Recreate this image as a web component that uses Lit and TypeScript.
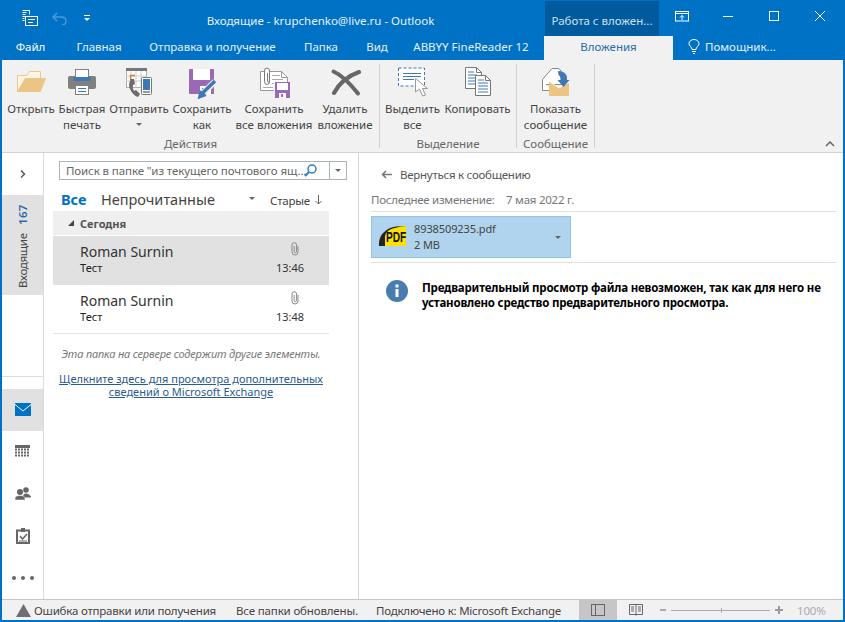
import { LitElement, html, css } from 'lit';
import { customElement } from 'lit/decorators.js';

const icons = {
  folder: html`<svg width="32" height="32" viewBox="0 0 32 32"><path d="M2.500 25V8.500h9l3-4h11V12h-15z" fill="#fbf5ea" stroke="#eec788"/><path d="M10 11h21l-5.300 14H2z" fill="#ecc584"/></svg>`,
  printer: html`<svg width="32" height="32" viewBox="0 0 32 32"><rect x="2" y="9" width="28" height="13" rx="2" fill="#808080"/><rect x="9.500" y="2.500" width="13" height="9" fill="#fff" stroke="#808080"/><rect x="7.500" y="10" width="17" height="4" fill="#3f78b5"/><rect x="9.500" y="18.500" width="13" height="9" fill="#fff" stroke="#808080"/><path d="M12 21.500h8M12 24.500h8" stroke="#3f78b5"/></svg>`,
  send: html`<svg width="32" height="32" viewBox="0 0 32 32"><rect x="3.500" y="1.500" width="20" height="19" fill="#fff" stroke="#aaa"/><rect x="3" y="1" width="21" height="3" fill="#777"/><path d="M8 4v17M13 4v17M18 4v17M3 9h21M3 14h21" stroke="#ccc"/><path d="M7.500 13V8.500H12" fill="none" stroke="#e07b2a" stroke-width="1.300"/><rect x="18.500" y="10.500" width="10" height="17" rx="1" fill="#fff" stroke="#777"/><rect x="20" y="12" width="7" height="11" fill="#3f78b5"/><path d="M20 25h7" stroke="#999" stroke-width="2"/><path d="M8 12q-4 6 0 12 3 5 7 6l2-3-4-4-2 1q-2-3-1-6l2-1-1-5z" fill="#6b6b6b"/></svg>`,
  saveAs: html`<svg width="32" height="32" viewBox="0 0 32 32"><path d="M4 2h23q1 0 1 1v24H4q-1 0-1-1V3q0-1 1-1z" fill="#9a68b5"/><rect x="7" y="2" width="17" height="11" fill="#fff"/><rect x="14" y="19" width="11" height="8" fill="#fff"/><rect x="16" y="21" width="3" height="5" fill="#9a68b5"/><path d="M15.500 27.500L29 14.500" stroke="#f1f1f1" stroke-width="6"/><path d="M14 29.500l1-4 2 .5 1 2zM16.500 26L29 14" stroke="#3f78b5" stroke-width="3.500"/></svg>`,
  saveAll: html`<svg width="32" height="32" viewBox="0 0 32 32"><path d="M2.500 4.500h21l6 6v13h-27z" fill="#fff" stroke="#999"/><path d="M23.500 4.500v6h6" fill="none" stroke="#999"/><path d="M14 8.500h8M14 12.500h11M14 16.500h5M5 20.500h10" stroke="#aaa"/><path d="M11.500 5v9.500q0 3-2.500 3t-2.500-3V4q0-3 2.500-3t2.500 3v10q0 1-1 1t-1-1V6" fill="#fff" stroke="#777"/><path d="M16 15h16v16H16z" fill="#f1f1f1"/><path d="M17 15h15v16H17z" fill="#9a68b5"/><rect x="19" y="16" width="11" height="7" fill="#fff"/><rect x="21" y="26" width="7" height="5" fill="#fff"/><rect x="23" y="27" width="2" height="3" fill="#9a68b5"/></svg>`,
  del: html`<svg width="32" height="32" viewBox="0 0 32 32" fill="none" stroke="#666" stroke-linecap="round"><path d="M4.500 4.500Q15 9 29 26.500" stroke-width="4"/><path d="M30 5Q13 11 5 26" stroke-width="4"/></svg>`,
  selectAll: html`<svg width="32" height="32" viewBox="0 0 32 32"><rect x="1.500" y="1" width="26" height="18" fill="#fff" stroke="#3f78b5" stroke-dasharray="3 2"/><path d="M6 6.500h18M6 9.500h18M6 12.500h11" stroke="#3f78b5"/><path d="M18.500 11.500V25l4-3 3 7 3-1-3-6.500h5z" fill="#fff" stroke="#999"/></svg>`,
  copy: html`<svg width="32" height="32" viewBox="0 0 32 32"><path d="M3.500 .5h11l5 5v16h-16z" fill="#fff" stroke="#777"/><path d="M14.500 .5v5h5" fill="none" stroke="#777"/><path d="M6 5h6M6 8h9M6 11h9M6 14h9M6 17h9" stroke="#3f78b5"/><path d="M13.500 8.500h10l5 5v15h-15z" fill="#fff" stroke="#777"/><path d="M23.500 8.500v5h5" fill="none" stroke="#777"/><path d="M16 13h6M16 16h10M16 19h10M16 22h10M16 25h10" stroke="#3f78b5"/></svg>`,
  message: html`<svg width="32" height="32" viewBox="0 0 32 32"><path d="M2.500 12.500L12 1.500h7l3 4v12H2.500z" fill="#fff" stroke="#888"/><path d="M2.500 12.500v11H10" fill="#fff" stroke="#888"/><path d="M9 14l10 7 10-6v14H9z" fill="#ecc584"/><path d="M9 14l10 7 10-6" fill="none" stroke="#fff"/><path d="M18 4q9 0 9 8v1h2.500l-6 7-6-7h3v-1q0-3-2-4z" fill="#3f78b5"/></svg>`,
  mail: html`<svg width="16" height="13" viewBox="0 0 16 13"><rect width="16" height="13" fill="#0072c6"/><path d="M0 1.500L8 8l8-6.500" fill="none" stroke="#fff"/></svg>`,
  calendar: html`<svg width="15" height="13" viewBox="0 0 15 13"><rect width="15" height="3" fill="#666"/><path d="M0 4.500h15M0 7.500h15M0 10.500h15" stroke="#666" stroke-width="2" stroke-dasharray="2 1"/></svg>`,
  people: html`<svg width="16" height="13" viewBox="0 0 16 13"><circle cx="11" cy="3" r="2.800" fill="#666"/><path d="M8 10q0-3.500 3-3.500t5 3v1H9z" fill="#666"/><circle cx="5" cy="5" r="3" fill="#666"/><path d="M0 13v-1.500q0-3 5-3t5 3V13z" fill="#666" stroke="#fff" stroke-width=".5"/></svg>`,
  tasks: html`<svg width="14" height="16" viewBox="0 0 14 16"><path d="M1 2.500h12v12.500H1z" fill="#fff" stroke="#666" stroke-width="2"/><path d="M5 0h4v4H5z" fill="#666"/><path d="M4 8l2.500 3L11 6" fill="none" stroke="#666" stroke-width="1.500"/><path d="M3 13h8" stroke="#666"/></svg>`,
  clip: html`<svg width="8" height="14" viewBox="0 0 8 14"><path d="M7 4v6a3 3 0 0 1-6 0V3a2.300 2.300 0 0 1 4.600 0v6.500a1.200 1.200 0 0 1-2.400 0V4" fill="none" stroke="#8a8a8a"/></svg>`,
  pdf: html`<svg width="30" height="24" viewBox="0 0 30 24"><path d="M2 21Q1 9 13 3 17 1 29 1v2H19Q11 4 9 11v10z" fill="#222"/><path d="M8 21V11q2-7 10-8 6-2 11-2v20z" fill="#ffe100"/><text x="9" y="17" font-family="Liberation Sans" font-size="14.500" font-weight="700" fill="#111" textLength="20" lengthAdjust="spacingAndGlyphs">PDF</text></svg>`,
};

const tabs = [
  { t: 'Файл', w: 57, strong: true },
  { t: 'Главная', w: 80 },
  { t: 'Отправка и получение', w: 147 },
  { t: 'Папка', w: 70 },
  { t: 'Вид', w: 42 },
  { t: 'ABBYY FineReader 12', w: 146 },
];

const groups = [
  {
    label: 'Действия',
    width: 378,
    items: [
      { icon: icons.folder, lines: ['Открыть'], w: 58 },
      { icon: icons.printer, lines: ['Быстрая', 'печать'], w: 44 },
      { icon: icons.send, lines: ['Отправить'], w: 70, caret: true },
      { icon: icons.saveAs, lines: ['Сохранить', 'как'], w: 56 },
      { icon: icons.saveAll, lines: ['Сохранить', 'все вложения'], w: 88 },
      { icon: icons.del, lines: ['Удалить', 'вложение'], w: 54 },
    ],
  },
  {
    label: 'Выделение',
    width: 137,
    items: [
      { icon: icons.selectAll, lines: ['Выделить', 'все'], w: 65 },
      { icon: icons.copy, lines: ['Копировать'], w: 65 },
    ],
  },
  {
    label: 'Сообщение',
    width: 78,
    items: [{ icon: icons.message, lines: ['Показать', 'сообщение'], w: 77 }],
  },
];

const mails = [
  { time: '13:46', selected: true },
  { time: '13:48', selected: false },
];

@customElement('app-root')
export class AppRoot extends LitElement {
  static styles = css`
    :host {
      display: block;
      width: 845px;
      height: 622px;
      overflow: hidden;
      font-family: 'Noto Sans', sans-serif;
      font-size: 11.5px;
      color: #444;
    }
    svg { display: block; }
    .window {
      height: 100%;
      box-sizing: border-box;
      background: #0072c6;
      padding: 0 2px 2px;
      display: flex;
      flex-direction: column;
    }
    .titlebar { height: 36px; display: flex; color: #fff; flex: none; }
    .qat { width: 100px; display: flex; align-items: center; padding-left: 20px; gap: 14px; box-sizing: border-box; }
    .title { flex: 1; text-align: center; line-height: 41px; color: #e8f1f9; padding-right: 6px; }
    .context { width: 114px; margin-top: 1px; background: #005a9e; color: #cfe0ee; text-align: center; line-height: 40px; }
    .controls { display: flex; }
    .ctl { width: 46px; display: flex; align-items: center; justify-content: center; padding-bottom: 4px; box-sizing: border-box; }
    .tabs { height: 24px; display: flex; flex: none; color: #e6f0f8; line-height: 21px; }
    .tab { text-align: center; white-space: nowrap; }
    .tab.strong { color: #fff; }
    .tab.active { width: 129px; background: #f1f1f1; color: #2b6ca8; }
    .help { display: flex; align-items: center; gap: 5px; padding: 0 0 3px 15px; }
    .ribbon {
      height: 93px;
      flex: none;
      background: #f1f1f1;
      border-bottom: 1px solid #d2d2d2;
      display: flex;
      position: relative;
      box-sizing: border-box;
    }
    .group {
      margin: 4px 0;
      box-sizing: border-box;
      border-right: 1px solid #d0d0d0;
      display: flex;
      flex-direction: column;
    }
    .items { display: flex; height: 72px; flex: none; }
    .item { text-align: center; line-height: 16px; white-space: nowrap; }
    .item .pic { height: 37px; display: flex; justify-content: center; padding-top: 3px; box-sizing: border-box; }
    .item .line { display: block; }
    .item .name { display: flex; flex-direction: column; align-items: center; }
    .caret { width: 0; height: 0; border: 3px solid transparent; border-top: 3px solid #666; border-bottom: 0; margin-top: 6px; }
    .glabel { text-align: center; line-height: 16px; height: 12px; color: #666; }
    .collapse { position: absolute; right: 8px; bottom: 5px; }
    .main { flex: 1; display: flex; background: #fff; min-height: 0; }
    .nav {
      width: 42px;
      flex: none;
      box-sizing: border-box;
      border-right: 1px solid #dcdcdc;
      display: flex;
      flex-direction: column;
    }
    .expand { height: 42px; display: flex; align-items: center; justify-content: center; }
    .folder {
      height: 100px;
      background: #e1e1e1;
      writing-mode: vertical-rl;
      transform: rotate(180deg);
      display: flex;
      align-items: center;
      gap: 8px;
      padding-top: 7px;
      box-sizing: border-box;
      color: #444;
      letter-spacing: -0.3px;
    }
    .folder b { color: #2b6ca8; font-weight: 600; letter-spacing: 0.3px; }
    .grow { flex: 1; }
    .navsep { border-top: 1px solid #dcdcdc; margin-bottom: 12px; }
    .navitem { height: 42px; display: flex; align-items: center; justify-content: center; padding-bottom: 1px; box-sizing: border-box; }
    .navitem.on { background: #e1e1e1; }
    .dots { display: flex; gap: 5px; }
    .dots i { width: 4px; height: 4px; border-radius: 50%; background: #666; }
    .list {
      width: 315px;
      flex: none;
      box-sizing: border-box;
      border-right: 1px solid #d4d4d4;
      padding: 8px 29px 0 9px;
    }
    .search {
      margin-left: 6px;
      width: 288px;
      height: 19px;
      box-sizing: border-box;
      border: 1px solid #abb3bb;
      display: flex;
      align-items: center;
      color: #666;
      line-height: 17px;
    }
    .search .q { flex: 1; padding-left: 6px; white-space: nowrap; letter-spacing: -0.1px; min-width: 0; }
    .search .mag { width: 25px; padding-right: 12px; box-sizing: border-box; }
    .search .drop { width: 16px; height: 100%; border-left: 1px solid #abb3bb; display: flex; align-items: center; justify-content: center; }
    .filter { height: 31px; display: flex; align-items: center; padding: 6px 0 0 8px; font-size: 14.500px; box-sizing: border-box; }
    .filter .all { color: #0072c6; font-weight: 700; width: 40px; }
    .filter .unread { width: 148px; color: #444; }
    .filter .sort { margin: 3px 0 0 auto; display: flex; align-items: center; gap: 5px; font-size: 11.500px; letter-spacing: -0.2px; padding-right: 7px; }
    .filter .caret { margin: 0; }
    .day {
      height: 24px;
      background: #efefef;
      display: flex;
      align-items: center;
      padding-left: 15px;
      gap: 6px;
      font-weight: 700;
      font-size: 11px;
      color: #555;
      margin-bottom: 1px;
    }
    .mail {
      height: 49px;
      display: flex;
      justify-content: space-between;
      padding: 7px 25px 0 27px;
      box-sizing: border-box;
      color: #222;
    }
    .mail.on { background: #e1e1e1; }
    .mail .who { font-size: 14px; line-height: 17px; color: #333; }
    .mail .subject { line-height: 16px; font-size: 11px; }
    .mail .right { display: flex; flex-direction: column; align-items: flex-end; margin-top: -1px; }
    .mail .right svg { margin-right: 5px; }
    .mail .time { line-height: 16px; margin-top: 4px; font-size: 11px; color: #333; }
    .listend { border-top: 1px solid #e3e3e3; margin-top: -1px; padding-top: 12px; text-align: center; }
    .note { font-style: italic; color: #777; font-size: 11px; line-height: 16px; letter-spacing: -0.17px; }
    .more { margin-top: 10px; color: #2b5a8f; text-decoration: underline; line-height: 13px; font-size: 11px; }
    .preview { flex: 1; padding: 13px 7px 0 12px; min-width: 0; }
    .back { display: flex; align-items: center; gap: 8px; padding-left: 10px; height: 16px; color: #555; letter-spacing: -0.25px; }
    .meta { margin-top: 9px; height: 17px; line-height: 17px; color: #777; display: flex; letter-spacing: -0.25px; }
    .meta span:first-child { width: 135px; }
    .rule { border-top: 1px solid #e1e1e1; }
    .rule.first { margin-top: 3px; }
    .card {
      margin: 4px 0 4px;
      width: 200px;
      height: 42px;
      box-sizing: border-box;
      background: #b1d4ee;
      border: 1px solid #92c3e4;
      display: flex;
      align-items: center;
      padding: 0 9px 0 5px;
      gap: 7px;
      color: #444;
      line-height: 16px;
      font-size: 11px;
      letter-spacing: -0.1px;
    }
    .card .fname { flex: 1; }
    .info { display: flex; gap: 14px; padding: 17px 0 0 15px; }
    .info .txt { font-weight: 700; color: #000; line-height: 15px; font-size: 11.500px; letter-spacing: -0.2px; }
    .status {
      height: 21px;
      flex: none;
      background: #f1f1f1;
      border-top: 1px solid #c6c6c6;
      display: flex;
      align-items: center;
      color: #444;
      box-sizing: border-box;
      white-space: nowrap;
    }
    .err { display: flex; align-items: center; gap: 3px; padding-left: 14px; width: 234px; box-sizing: border-box; letter-spacing: -0.2px; }
    .st1 { width: 140px; letter-spacing: -0.15px; }
    .st2 { width: 203px; letter-spacing: -0.22px; }
    .view { width: 38px; height: 100%; display: flex; align-items: center; justify-content: center; }
    .view.on { background: #c6c6c6; }
    .zoom { display: flex; align-items: center; padding-left: 5px; gap: 5px; color: #aaa; }
    .zoom .track { width: 99px; height: 1px; background: #aaa; position: relative; }
    .zoom .track i { position: absolute; left: 50px; top: -2px; width: 1px; height: 5px; background: #aaa; }
    .pct { margin-left: 9px; letter-spacing: -0.2px; }
  `;

  renderItem(it: any) {
    return html`<div class="item" style="width:${it.w}px">
      <div class="pic">${it.icon}</div>
      <div class="name">
        ${it.lines.map((l: string) => html`<span class="line">${l}</span>`)}
        ${it.caret ? html`<span class="caret"></span>` : ''}
      </div>
    </div>`;
  }

  render() {
    return html`<div class="window">
      <div class="titlebar">
        <div class="qat">
          <svg width="16" height="16" viewBox="0 0 16 16" fill="none" stroke="#fff"><path d="M.5 .5h7v4M.5 2.500h4M.5 4.500h3M.5 6.500h3M.5 8.500h2M.5 10.500h2" /><rect x="3.500" y="6.500" width="12" height="9"/><path d="M6 9.500h7M6 12.500h5"/></svg>
          <svg width="15" height="13" viewBox="0 0 15 13" fill="none" stroke="#4a9bd8" stroke-width="1.500"><path d="M5 1L1 5l4 4M1 5h8q5 0 5 4t-4 4"/></svg>
          <svg style="margin-left:2px" width="8" height="8" viewBox="0 0 8 8" fill="#fff"><rect x="1" y="1" width="6" height="1"/><path d="M1 4h6L4 7z"/></svg>
        </div>
        <div class="title">Входящие - krupchenko@live.ru - Outlook</div>
        <div class="context">Работа с вложен...</div>
        <div class="controls">
          <div class="ctl"><svg width="14" height="11" viewBox="0 0 14 11" fill="none" stroke="#fff"><rect x=".5" y=".5" width="13" height="9.500"/><path d="M.5 2.500h13M7 9V4.500M5 6.500l2-2 2 2"/></svg></div>
          <div class="ctl"><svg width="10" height="10" viewBox="0 0 10 10" stroke="#fff"><path d="M0 5.500h10"/></svg></div>
          <div class="ctl"><svg width="10" height="10" viewBox="0 0 10 10" fill="none" stroke="#fff"><rect x=".5" y=".5" width="9" height="9"/></svg></div>
          <div class="ctl"><svg width="10" height="10" viewBox="0 0 10 10" stroke="#fff"><path d="M0 0l10 10M10 0L0 10"/></svg></div>
        </div>
      </div>
      <div class="tabs">
        ${tabs.map((t) => html`<div class="tab ${t.strong ? 'strong' : ''}" style="width:${t.w}px">${t.t}</div>`)}
        <div class="tab active">Вложения</div>
        <div class="tab help">
          <svg width="12" height="15" viewBox="0 0 12 15" fill="none" stroke="#fff"><path d="M4 10.500Q4 9 2.500 7.500 1 6 1 4.500a5 4 0 0 1 10 0Q11 6 9.500 7.500 8 9 8 10.500zM4 12.500h4M5 14.500h2"/></svg>
          Помощник...
        </div>
      </div>
      <div class="ribbon">
        ${groups.map(
          (g) => html`<div class="group" style="width:${g.width}px">
            <div class="items">${g.items.map((it) => this.renderItem(it))}</div>
            <div class="glabel">${g.label}</div>
          </div>`,
        )}
        <svg class="collapse" width="10" height="6" viewBox="0 0 10 6" fill="none" stroke="#666" stroke-width="1.500"><path d="M1 5l4-4 4 4"/></svg>
      </div>
      <div class="main">
        <div class="nav">
          <div class="expand"><svg width="6" height="8" viewBox="0 0 6 8" fill="none" stroke="#555" stroke-width="1.500"><path d="M1 .5L4.500 4 1 7.500"/></svg></div>
          <div class="folder"><span>Входящие</span><b>167</b></div>
          <div class="grow"></div>
          <div class="navsep"></div>
          <div class="navitem on">${icons.mail}</div>
          <div class="navitem">${icons.calendar}</div>
          <div class="navitem">${icons.people}</div>
          <div class="navitem">${icons.tasks}</div>
          <div class="navitem"><div class="dots"><i></i><i></i><i></i></div></div>
        </div>
        <div class="list">
          <div class="search">
            <div class="q">Поиск в папке "из текущего почтового ящ...</div>
            <div class="mag"><svg width="13" height="13" viewBox="0 0 13 13" fill="none" stroke="#2b7cc4" stroke-width="1.500"><circle cx="8" cy="5" r="4"/><path d="M5 8l-4 4" stroke-width="2"/></svg></div>
            <div class="drop"><span class="caret" style="margin:0"></span></div>
          </div>
          <div class="filter">
            <span class="all">Все</span>
            <span class="unread">Непрочитанные</span>
            <span class="caret"></span>
            <span class="sort">Старые
              <svg width="7" height="10" viewBox="0 0 7 10" fill="none" stroke="#666"><path d="M3.500 0v9M.5 6l3 3 3-3"/></svg>
            </span>
          </div>
          <div class="day">
            <svg width="6" height="6" viewBox="0 0 6 6" fill="#444"><path d="M6 0v6H0z"/></svg>
            Сегодня
          </div>
          ${mails.map(
            (m) => html`<div class="mail ${m.selected ? 'on' : ''}">
              <div>
                <div class="who">Roman Surnin</div>
                <div class="subject">Тест</div>
              </div>
              <div class="right">${icons.clip}<div class="time">${m.time}</div></div>
            </div>`,
          )}
          <div class="listend">
            <div class="note">Эта папка на сервере содержит другие элементы.</div>
            <div class="more">Щелкните здесь для просмотра дополнительных<br />сведений о Microsoft Exchange</div>
          </div>
        </div>
        <div class="preview">
          <div class="back">
            <svg width="11" height="9" viewBox="0 0 11 9" fill="none" stroke="#777" stroke-width="1.500"><path d="M11 4.500H1.500M5 1L1.500 4.500 5 8"/></svg>
            Вернуться к сообщению
          </div>
          <div class="meta"><span>Последнее изменение:</span><span>7 мая 2022 г.</span></div>
          <div class="rule first"></div>
          <div class="card">
            ${icons.pdf}
            <div class="fname"><div>8938509235.pdf</div><div>2 MB</div></div>
            <span class="caret" style="margin:0"></span>
          </div>
          <div class="rule"></div>
          <div class="info">
            <svg width="22" height="22" viewBox="0 0 22 22" style="flex:none"><circle cx="11" cy="11" r="11" fill="#4a7cb0"/><rect x="9.500" y="9" width="3" height="8" fill="#fff"/><rect x="9.500" y="4.500" width="3" height="3" fill="#fff"/></svg>
            <div class="txt">Предварительный просмотр файла невозможен, так как для него не<br />установлено средство предварительного просмотра.</div>
          </div>
        </div>
      </div>
      <div class="status">
        <div class="err">
          <svg width="15" height="13" viewBox="0 0 15 13" fill="#6f6f6f"><path d="M7.500 0L15 13H0z"/></svg>
          Ошибка отправки или получения
        </div>
        <div class="st1">Все папки обновлены.</div>
        <div class="st2">Подключено к: Microsoft Exchange</div>
        <div class="view on"><svg width="14" height="12" viewBox="0 0 14 12" fill="none" stroke="#666"><rect x=".5" y=".5" width="13" height="11"/><path d="M4.500 .5v11"/></svg></div>
        <div class="view"><svg width="14" height="12" viewBox="0 0 14 12" fill="none" stroke="#666"><path d="M.5 .5h13v10h-13zM7 .5v11M2 3h3M2 5h3M2 7h3M9 3h3M9 5h3M9 7h3"/></svg></div>
        <div class="zoom">
          <svg width="6" height="6" viewBox="0 0 6 6" stroke="#aaa" stroke-width="2"><path d="M0 3h6"/></svg>
          <div class="track"><i></i></div>
          <svg width="8" height="8" viewBox="0 0 8 8" stroke="#999" stroke-width="2"><path d="M0 4h8M4 0v8"/></svg>
          <span class="pct">100%</span>
        </div>
      </div>
    </div>`;
  }
}
